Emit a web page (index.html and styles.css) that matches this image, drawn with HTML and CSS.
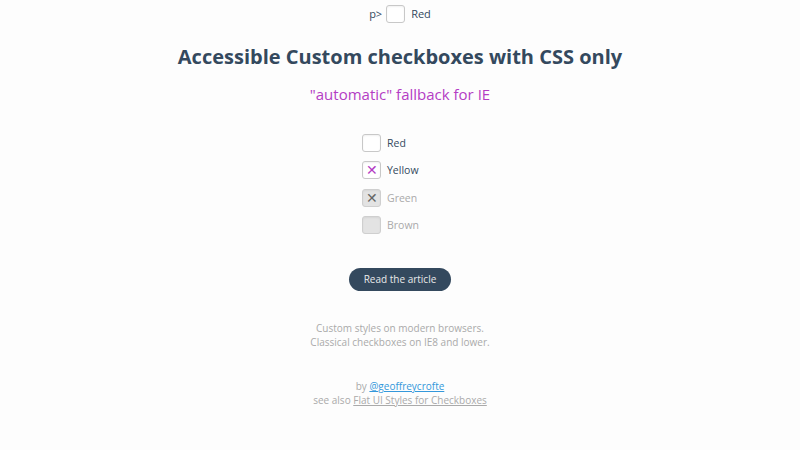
FILE: index.html
```html
<!DOCTYPE html>
<html>
<head>
<meta charset="utf-8">
<link rel="stylesheet" href="styles.css">
</head>
<body>
<div class="page">
  <div class="top"><span>p&gt;</span><span class="box"></span><span>Red</span></div>
  <h1 class="title">Accessible Custom checkboxes with CSS only</h1>
  <h2 class="sub">"automatic" fallback for IE</h2>
  <div class="list">
    <div class="row"><span class="box"></span><span class="lab">Red</span></div>
    <div class="row"><span class="box checked">&#x2715;</span><span class="lab">Yellow</span></div>
    <div class="row"><span class="box dis checked">&#x2715;</span><span class="lab dim">Green</span></div>
    <div class="row"><span class="box dis"></span><span class="lab dim">Brown</span></div>
  </div>
  <a class="btn">Read the article</a>
  <p class="note">Custom styles on modern browsers.<br>Classical checkboxes on IE8 and lower.</p>
  <p class="credit">by <a class="link">@geoffreycrofte</a><br>see also <a class="link2">Flat UI Styles for Checkboxes</a></p>
</div>
</body>
</html>
```
FILE: styles.css
```css
html, body { margin: 0; padding: 0; }
body {
  background: #fdfdfd;
  font-family: "Open Sans", "Noto Sans", sans-serif;
  color: #34495e;
  width: 800px;
  height: 450px;
  overflow: hidden;
}
.page {
  display: flex;
  flex-direction: column;
  align-items: center;
  padding-top: 5px;
}
.top {
  display: flex;
  align-items: center;
  gap: 4px;
  font-size: 11px;
  color: #34495e;
  height: 17px;
}
.top .box { margin-right: 2px; }
.box {
  box-sizing: border-box;
  width: 19px;
  height: 18px;
  border: 1px solid #c8c8c8;
  border-radius: 3px;
  background: #fff;
  display: inline-flex;
  align-items: center;
  justify-content: center;
  font-size: 14px;
  line-height: 1;
  box-shadow: inset 0 1px 2px rgba(0,0,0,.06);
}
.box.checked { color: #b43cc4; }
.box.dis { background: #e3e3e3; border-color: #cfcfcf; }
.box.dis.checked { color: #666; }
.title {
  margin: 21px 0 0 0;
  font-size: 20px;
  font-weight: 700;
  color: #34495e;
  line-height: 28px;
}
.sub {
  margin: 12px 0 0 0;
  font-size: 15px;
  font-weight: 400;
  color: #b43cc4;
  line-height: 22px;
}
.list {
  margin-top: 29px;
  display: flex;
  flex-direction: column;
  gap: 9.3px;
  width: 76px;
}
.row {
  display: flex;
  align-items: center;
  gap: 6px;
  height: 18px;
}
.lab { font-size: 10.5px; color: #34495e; }
.lab.dim { color: #aaa; }
.btn {
  margin-top: 34px;
  background: #34495e;
  color: #eaeaea;
  font-size: 10px;
  border-radius: 12px;
  height: 23px;
  line-height: 23px;
  width: 102px;
  text-align: center;
}
.note {
  margin: 30px 0 0 0;
  font-size: 10px;
  line-height: 14px;
  color: #aaa;
  text-align: center;
}
.credit {
  margin: 30px 0 0 0;
  font-size: 10px;
  line-height: 14px;
  color: #aaa;
  text-align: center;
}
.link { color: #3498db; text-decoration: underline; }
.link2 { color: #aaa; text-decoration: underline; }
```
